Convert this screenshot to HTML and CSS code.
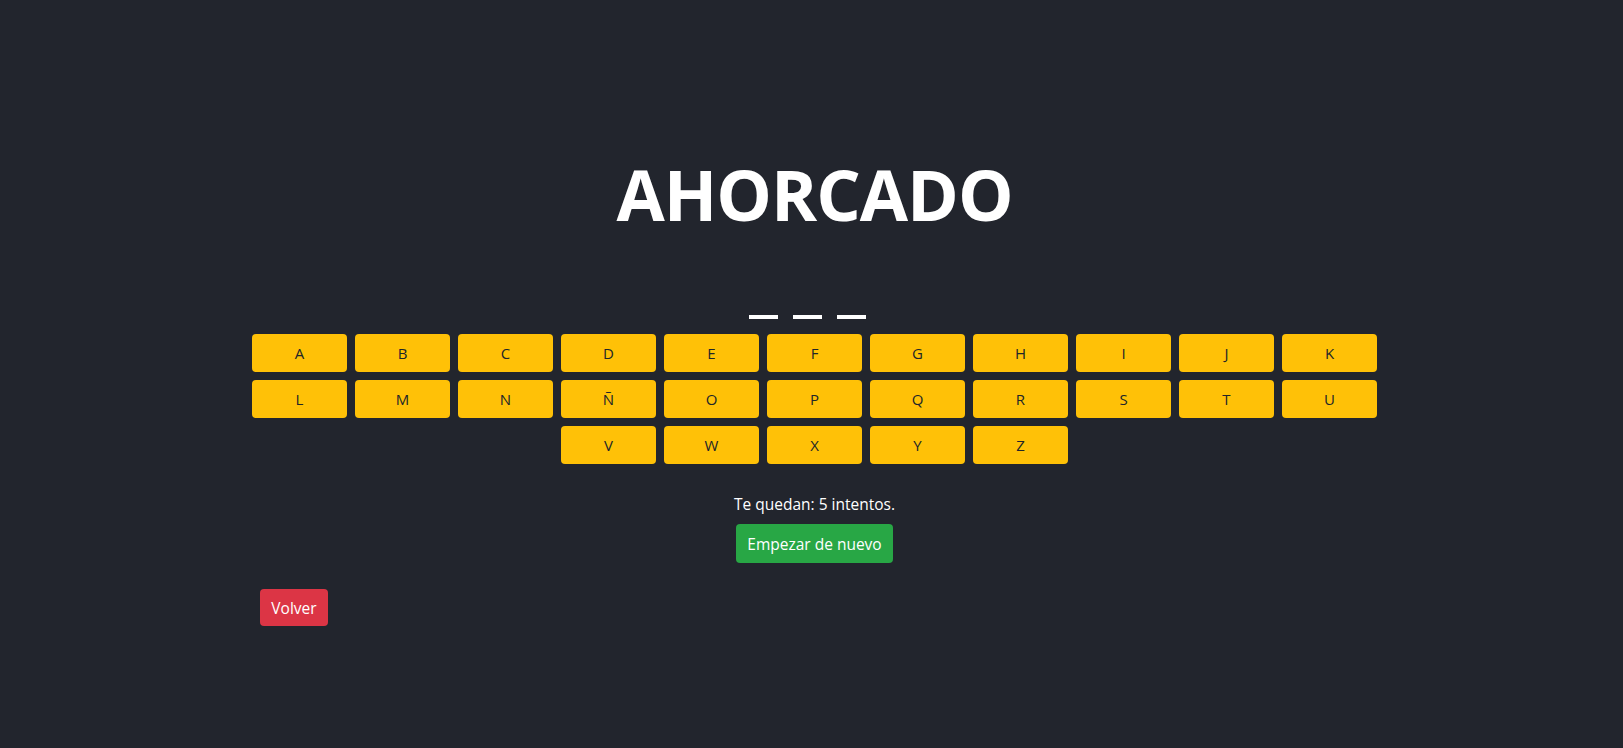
FILE: index.html
```html
<!DOCTYPE html>
<html lang="es">
<head>
<meta charset="utf-8">
<title>Ahorcado</title>
<link rel="stylesheet" href="styles.css">
</head>
<body>
<div class="page">
  <main class="game">
    <h1 class="title">AHORCADO</h1>
    <div class="word">
      <span class="blank"></span><span class="blank"></span><span class="blank"></span>
    </div>
    <div class="letters">
      <button class="key">A</button>
      <button class="key">B</button>
      <button class="key">C</button>
      <button class="key">D</button>
      <button class="key">E</button>
      <button class="key">F</button>
      <button class="key">G</button>
      <button class="key">H</button>
      <button class="key">I</button>
      <button class="key">J</button>
      <button class="key">K</button>
      <button class="key">L</button>
      <button class="key">M</button>
      <button class="key">N</button>
      <button class="key">Ñ</button>
      <button class="key">O</button>
      <button class="key">P</button>
      <button class="key">Q</button>
      <button class="key">R</button>
      <button class="key">S</button>
      <button class="key">T</button>
      <button class="key">U</button>
      <button class="key">V</button>
      <button class="key">W</button>
      <button class="key">X</button>
      <button class="key">Y</button>
      <button class="key">Z</button>
    </div>
    <p class="attempts">Te quedan: 5 intentos.</p>
    <div class="restart-row">
      <button class="btn btn-success">Empezar de nuevo</button>
    </div>
    <div class="back-row">
      <button class="btn btn-danger">Volver</button>
    </div>
  </main>
</div>
</body>
</html>
```
FILE: styles.css
```css
html, body {
  margin: 0;
  padding: 0;
}

body {
  background: #22252d;
  color: #ffffff;
  font-family: "Open Sans", "Noto Sans", sans-serif;
  font-size: 16px;
  line-height: 1.5;
  min-height: 748px;
}

.page {
  padding-left: 6px;
}

.game {
  width: 1125px;
  margin: 0 auto;
  padding-top: 152px;
}

.title {
  margin: 0;
  text-align: center;
  font-size: 70px;
  font-weight: 700;
  line-height: 84px;
  letter-spacing: -1px;
}

.word {
  display: flex;
  justify-content: center;
  height: 4px;
  margin-top: 79px;
}

.blank {
  width: 29px;
  height: 4px;
  background: #ffffff;
  margin-right: 15px;
}

.letters {
  display: flex;
  flex-wrap: wrap;
  justify-content: center;
  gap: 8px;
  margin-top: 15px;
}

.key {
  width: 95px;
  height: 38px;
  border: none;
  border-radius: 4px;
  background: #ffc107;
  color: #212529;
  font-family: inherit;
  font-size: 15px;
  font-weight: 400;
  padding: 0;
  cursor: pointer;
}

.attempts {
  margin: 28px 0 0;
  text-align: center;
  line-height: 24px;
  font-size: 15.5px;
}

.restart-row {
  display: flex;
  justify-content: center;
  margin-top: 8px;
}

.btn {
  height: 38px;
  border: none;
  border-radius: 4px;
  color: #ffffff;
  font-family: inherit;
  font-size: 15.5px;
  padding: 0;
  white-space: nowrap;
  cursor: pointer;
}

.btn-success {
  background: #28a745;
  width: 157px;
  height: 39px;
}

.btn-danger {
  background: #dc3545;
  width: 68px;
  height: 37px;
}

.back-row {
  margin-top: 26px;
  padding-left: 8px;
}
```
